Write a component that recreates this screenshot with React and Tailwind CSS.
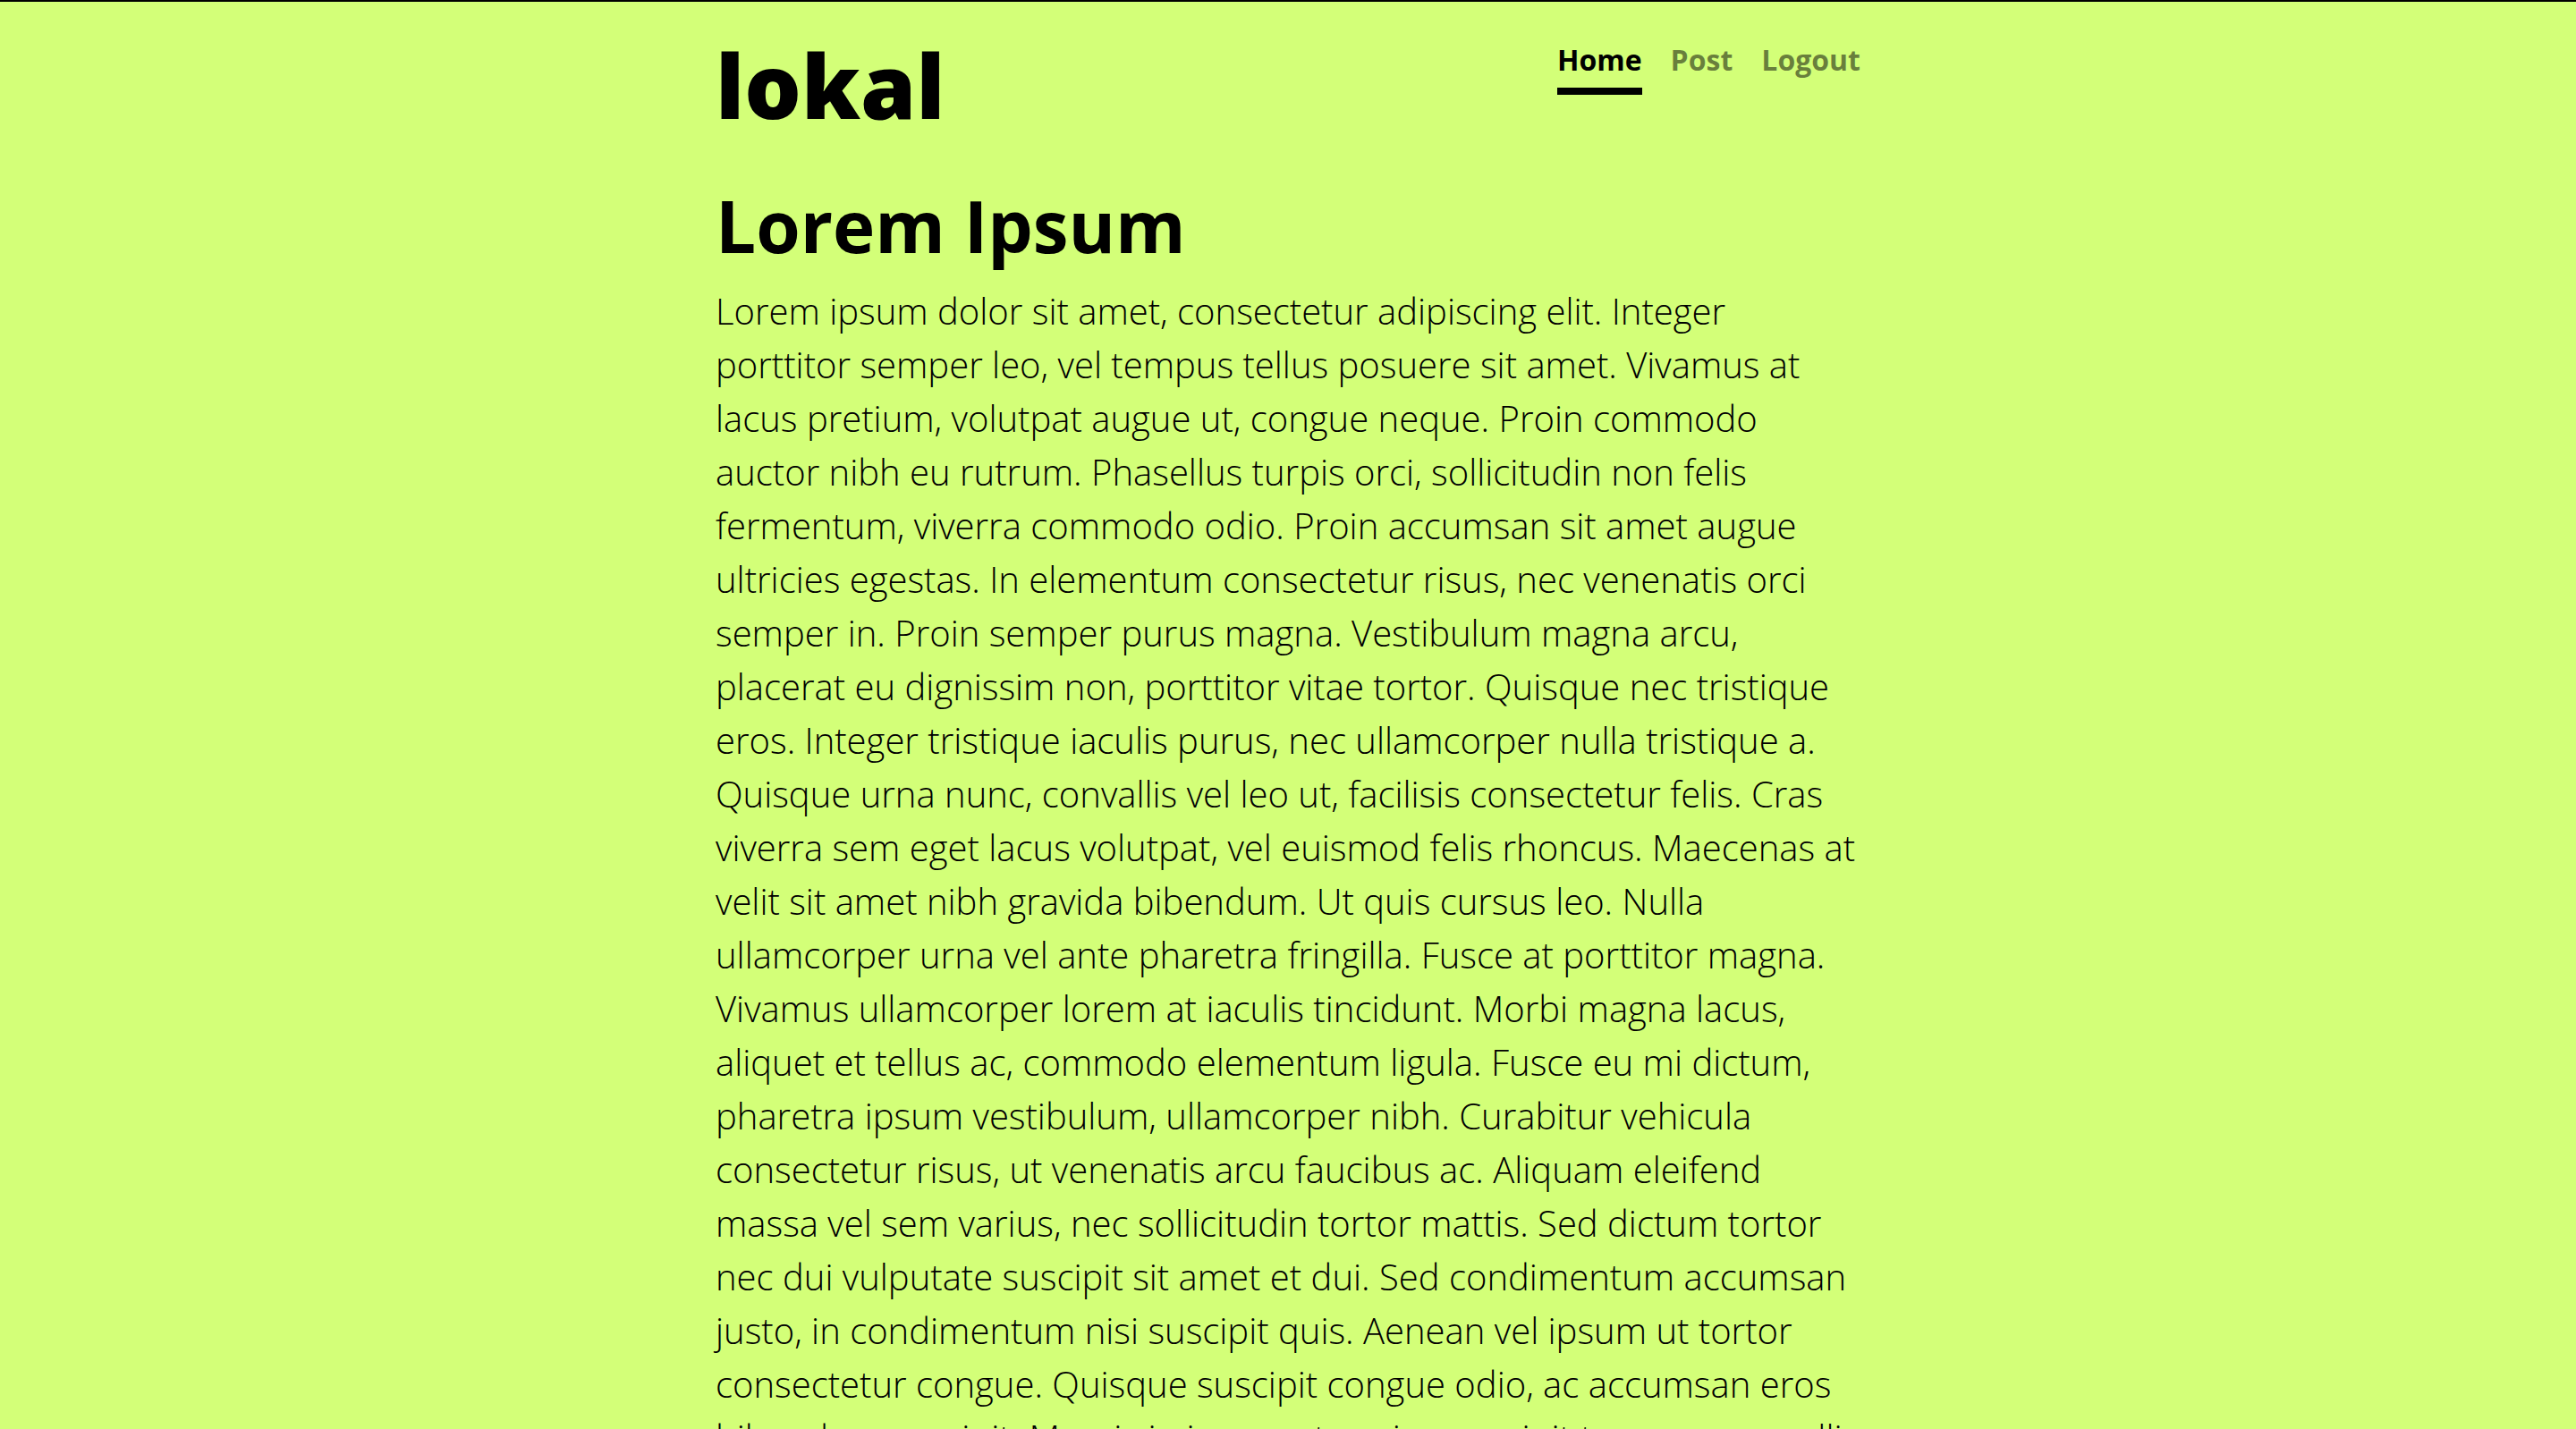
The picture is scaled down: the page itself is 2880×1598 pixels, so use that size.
import React from 'react';

const bodyText =
  'Lorem ipsum dolor sit amet, consectetur adipiscing elit. Integer porttitor semper leo, vel tempus tellus posuere sit amet. Vivamus at lacus pretium, volutpat augue ut, congue neque. Proin commodo auctor nibh eu rutrum. Phasellus turpis orci, sollicitudin non felis fermentum, viverra commodo odio. Proin accumsan sit amet augue ultricies egestas. In elementum consectetur risus, nec venenatis orci semper in. Proin semper purus magna. Vestibulum magna arcu, placerat eu dignissim non, porttitor vitae tortor. Quisque nec tristique eros. Integer tristique iaculis purus, nec ullamcorper nulla tristique a. Quisque urna nunc, convallis vel leo ut, facilisis consectetur felis. Cras viverra sem eget lacus volutpat, vel euismod felis rhoncus. Maecenas at velit sit amet nibh gravida bibendum. Ut quis cursus leo. Nulla ullamcorper urna vel ante pharetra fringilla. Fusce at porttitor magna. Vivamus ullamcorper lorem at iaculis tincidunt. Morbi magna lacus, aliquet et tellus ac, commodo elementum ligula. Fusce eu mi dictum, pharetra ipsum vestibulum, ullamcorper nibh. Curabitur vehicula consectetur risus, ut venenatis arcu faucibus ac. Aliquam eleifend massa vel sem varius, nec sollicitudin tortor mattis. Sed dictum tortor nec dui vulputate suscipit sit amet et dui. Sed condimentum accumsan justo, in condimentum nisi suscipit quis. Aenean vel ipsum ut tortor consectetur congue. Quisque suscipit congue odio, ac accumsan eros bibendum suscipit. Mauris in ipsum et sapien suscipit tempus, ac mollis nisi dictum. Nam lacinia dui sit amet ligula facilisis, a pharetra nunc aliquet.';

const links = [
  { name: 'Home', active: true },
  { name: 'Post', active: false },
  { name: 'Logout', active: false },
];

export default function App() {
  return (
    <div className="min-h-screen bg-[#d3ff78] border-t-2 border-black text-black font-['Open_Sans',sans-serif]">
      <div className="mx-auto w-[1280px]">
        <header className="flex justify-between items-start pt-[32px]">
          <h1 className="text-[100px] leading-[120px] font-extrabold">lokal</h1>
          <nav className="flex gap-[32px] mt-[9px]">
            {links.map((link) => (
              <a
                key={link.name}
                href="#"
                className={
                  link.active
                    ? 'text-[32px] leading-[48px] font-bold text-black pb-[7px] border-b-[8px] border-black'
                    : 'text-[32px] leading-[48px] font-bold text-black/50 pb-[7px] border-b-[8px] border-transparent'
                }
              >
                {link.name}
              </a>
            ))}
          </nav>
        </header>

        <main>
          <h2 className="mt-[50px] text-[80px] leading-[96px] font-bold">Lorem Ipsum</h2>
          <p className="mt-[18px] text-[40px] leading-[60px] font-light">{bodyText}</p>
        </main>
      </div>
    </div>
  );
}
